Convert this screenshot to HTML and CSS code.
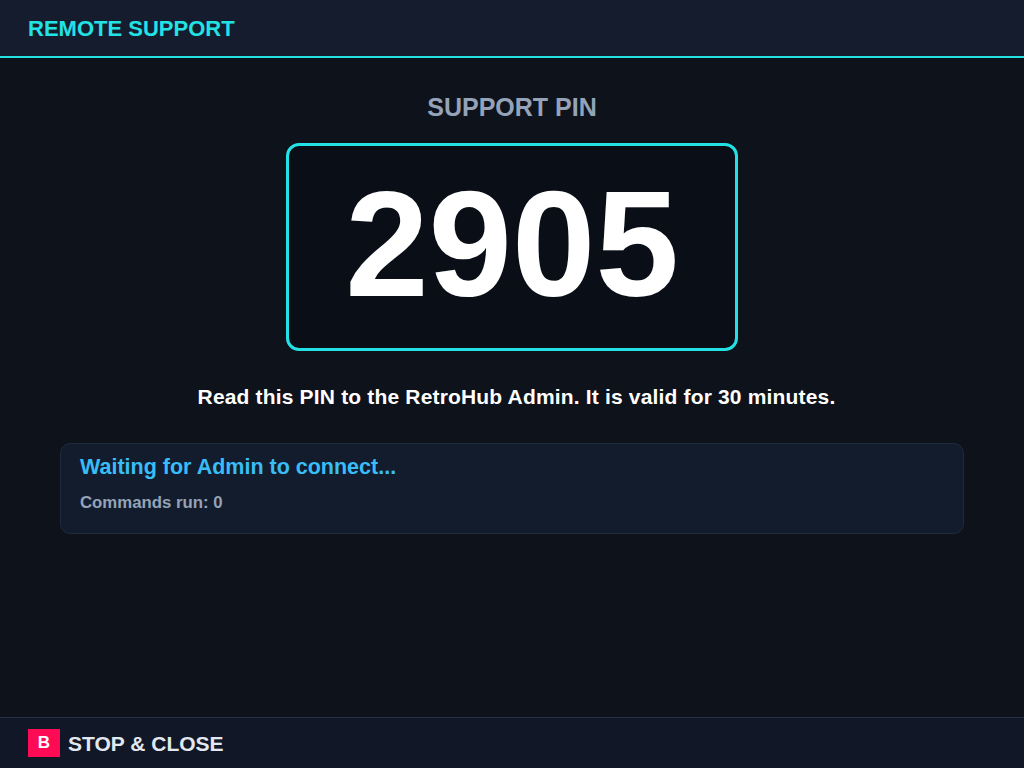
FILE: index.html
```html
<!DOCTYPE html>
<html lang="en">
<head>
    <meta charset="UTF-8">
    <meta name="viewport" content="width=device-width, initial-scale=1.0">
    <title>Remote Support</title>
    <link rel="stylesheet" href="styles.css">
</head>
<body>
    <header class="top-bar">
        <h1>REMOTE SUPPORT</h1>
    </header>

    <main class="support">
        <h2 class="pin-label">SUPPORT PIN</h2>
        <div class="pin-box">
            <span id="pin">2905</span>
        </div>
        <p class="pin-hint">Read this PIN to the RetroHub Admin. It is valid for 30 minutes.</p>

        <div class="status-card">
            <div class="status-title" id="status">Waiting for Admin to connect...</div>
            <div class="status-count">Commands run: <span id="count">0</span></div>
        </div>
    </main>

    <footer class="bottom-bar">
        <span class="btn-badge">B</span>
        <span class="btn-label">STOP &amp; CLOSE</span>
    </footer>
</body>
</html>
```

FILE: styles.css
```css
html, body {
    height: 100%;
}
body {
    margin: 0;
    font-family: "Liberation Sans", Arial, sans-serif;
    background-color: #0e121b;
    color: #fff;
    display: flex;
    flex-direction: column;
}
.top-bar {
    height: 58px;
    box-sizing: border-box;
    background-color: #151c2d;
    border-bottom: 2px solid #22e2e6;
    display: flex;
    align-items: center;
    padding: 1px 28px 0;
}
.top-bar h1 {
    margin: 0;
    font-size: 22px;
    color: #22e2e6;
}
.support {
    flex: 1;
    display: flex;
    flex-direction: column;
    align-items: center;
    padding: 35px 60px 0;
}
.pin-label {
    margin: 0;
    font-size: 25px;
    line-height: 29px;
    color: #94a3b8;
}
.pin-box {
    margin-top: 21px;
    padding: 12px 56px 18px;
    border: 3px solid #22e2e6;
    border-radius: 13px;
    background-color: #0a0e17;
    font-size: 150px;
    line-height: 172px;
    font-weight: bold;
}
.pin-hint {
    margin: 34px 0 0;
    padding-left: 9px;
    font-size: 21px;
    line-height: 24px;
    letter-spacing: 0.17px;
    font-weight: bold;
}
.status-card {
    align-self: stretch;
    margin-top: 34px;
    padding: 11px 19px 20px;
    background-color: #131c2c;
    border: 1px solid #1f2a3c;
    border-radius: 10px;
}
.status-title {
    font-size: 21.5px;
    line-height: 25px;
    font-weight: bold;
    color: #38bdf8;
}
.status-count {
    margin-top: 13px;
    font-size: 16.8px;
    line-height: 20px;
    font-weight: bold;
    color: #94a3b8;
}
.bottom-bar {
    height: 49px;
    border-top: 1px solid #263145;
    background-color: #111726;
    display: flex;
    align-items: center;
    gap: 8px;
    padding: 1px 28px 0;
}
.btn-badge {
    width: 32px;
    height: 28px;
    margin-top: -2px;
    background-color: #ff0a55;
    color: #fff;
    font-size: 17px;
    font-weight: bold;
    display: flex;
    align-items: center;
    justify-content: center;
}
.btn-label {
    font-size: 21px;
    font-weight: bold;
    color: #e2e8f0;
}
```
